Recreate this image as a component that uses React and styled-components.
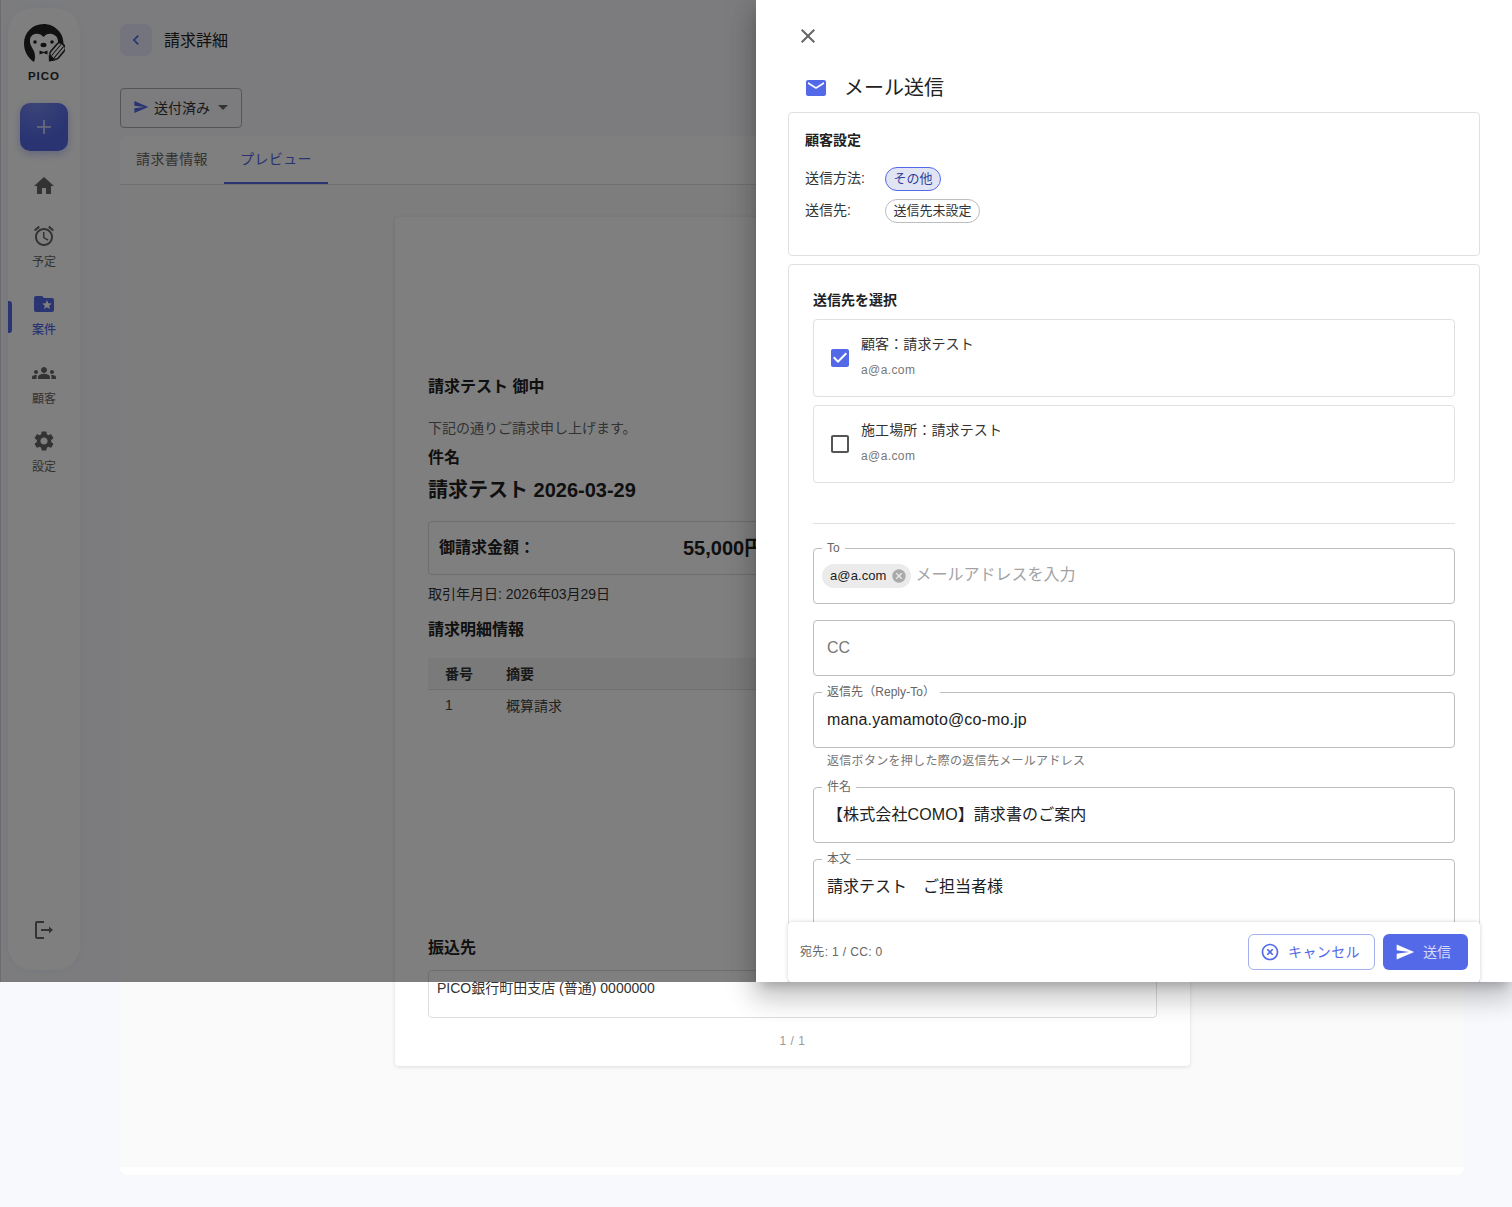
import React from "react";
import styled, { createGlobalStyle } from "styled-components";

const PRIMARY = "#5469e7";
const FONT = `"Liberation Sans", "Noto Sans CJK JP", sans-serif`;

const Global = createGlobalStyle`
  html, body { margin: 0; padding: 0; background: #f8f9fd; }
  body { font-family: ${FONT}; color: #212121; }
  * { box-sizing: border-box; }
`;

const Page = styled.div`
  position: relative;
  width: 1512px;
  height: 1207px;
  overflow: hidden;
  background: #f8f9fd;
  display: flex;
`;

/* ---------- Sidebar ---------- */
const SideColumn = styled.div`
  width: 120px;
  flex: none;
  padding: 8px 40px 0 8px;
`;
const Sidebar = styled.nav`
  width: 72px;
  height: 962px;
  border-radius: 24px;
  background: #fff;
  box-shadow: 0 0 8px rgba(84, 105, 231, 0.08);
  display: flex;
  flex-direction: column;
  align-items: center;
  padding-top: 16px;
  position: relative;
`;
const LogoWord = styled.div`
  font-size: 11.5px;
  font-weight: 700;
  letter-spacing: 1px;
  line-height: 14px;
  margin-top: 5px;
  color: #2a2a2a;
`;
const AddButton = styled.div`
  width: 48px;
  height: 48px;
  margin: 20px 0 23px;
  border-radius: 10px;
  background: radial-gradient(circle at 35% 0%, #7888ee, ${PRIMARY} 65%);
  box-shadow: 0 3px 8px rgba(84, 105, 231, 0.35);
  display: flex;
  align-items: center;
  justify-content: center;
`;
const NavItem = styled.div`
  width: 100%;
  display: flex;
  flex-direction: column;
  align-items: center;
  margin-bottom: ${(p) => p.$gap ?? 20.33}px;
  font-size: 12px;
  line-height: 20px;
  color: ${(p) => (p.$active ? PRIMARY : "#666")};
  font-weight: ${(p) => (p.$active ? 500 : 400)};
`;
const NavLabel = styled.span`
  margin-top: 4px;
`;
const NavIndicator = styled.span`
  position: absolute;
  left: 0;
  top: 293px;
  width: 4px;
  height: 32px;
  background: ${PRIMARY};
  border-radius: 0 3px 3px 0;
`;
const LogoutSlot = styled.div`
  margin-top: auto;
  margin-bottom: 28px;
  display: flex;
`;

/* ---------- Main ---------- */
const Main = styled.main`
  width: 1344px;
  flex: none;
  display: flex;
  flex-direction: column;
  padding-top: 24px;
`;
const TitleRow = styled.div`
  display: flex;
  align-items: center;
  gap: 12px;
  height: 32px;
`;
const BackButton = styled.div`
  width: 32px;
  height: 32px;
  border-radius: 8px;
  background: #e6e9fb;
  display: flex;
  align-items: center;
  justify-content: center;
`;
const PageTitle = styled.div`
  font-size: 16px;
  color: #212121;
  padding-bottom: 2px;
`;
const StatusButton = styled.div`
  width: 122px;
  height: 40px;
  margin-top: 32px;
  border: 1px solid #aaa;
  border-radius: 4px;
  display: flex;
  align-items: center;
  padding: 0 0 2px 12px;
  gap: 5px;
  font-size: 14px;
  color: #333;
`;
const DropSlot = styled.span`
  margin-left: -4px;
  display: flex;
`;
const Board = styled.div`
  margin-top: 8px;
  height: 1039px;
  background: #fff;
  border-radius: 8px;
  display: flex;
  flex-direction: column;
  padding-bottom: 8px;
`;
const TabBar = styled.div`
  height: 49px;
  flex: none;
  display: flex;
  border-bottom: 1px solid #e0e0e0;
`;
const Tab = styled.div`
  height: 48px;
  padding: 0 16px 2px;
  display: flex;
  align-items: center;
  font-size: 14px;
  letter-spacing: 0.4px;
  color: ${(p) => (p.$active ? PRIMARY : "#666")};
  border-bottom: 2px solid ${(p) => (p.$active ? PRIMARY : "transparent")};
`;
const Stage = styled.div`
  flex: 1;
  background: #fafafa;
  padding: 32px 0 0 275px;
`;
const Sheet = styled.div`
  width: 795px;
  height: 849px;
  background: #fff;
  border-radius: 4px;
  box-shadow: 0 1px 4px rgba(0, 0, 0, 0.12);
  padding: 158px 33px 0;
  display: flex;
  flex-direction: column;
`;
const Heading = styled.div`
  font-size: ${(p) => p.$size ?? 16}px;
  font-weight: 700;
  line-height: ${(p) => p.$line ?? 24}px;
  color: #212121;
  margin-top: ${(p) => p.$top ?? 0}px;
`;
const SheetText = styled.div`
  font-size: 14px;
  line-height: 20px;
  color: ${(p) => p.$color ?? "#333"};
  margin-top: ${(p) => p.$top ?? 0}px;
`;
const AmountBox = styled.div`
  height: 54px;
  margin-top: 15px;
  border: 1px solid #ddd;
  border-radius: 4px;
  display: grid;
  grid-template-columns: 244px 1fr;
  align-items: center;
  padding-left: 10px;
`;
const AmountValue = styled.div`
  font-size: 20px;
  font-weight: 700;
  color: #212121;
  padding-bottom: 4px;
`;
const TableHead = styled.div`
  height: 32px;
  margin-top: 16px;
  padding: 0 0 2px 17px;
  background: #f5f5f5;
  border-bottom: 1px solid #e0e0e0;
  display: grid;
  grid-template-columns: 61px 1fr;
  align-items: center;
  font-size: 14px;
  font-weight: 700;
  color: #333;
`;
const TableRow = styled.div`
  height: 32px;
  padding: 0 0 2px 17px;
  display: grid;
  grid-template-columns: 61px 1fr;
  align-items: center;
  font-size: 14px;
  color: #444;
`;
const BankBox = styled.div`
  height: 48px;
  margin-top: 10px;
  border: 1px solid #ddd;
  border-radius: 4px;
  padding: 7px 8px;
  font-size: 14px;
  line-height: 20px;
  color: #333;
`;
const PageNumber = styled.div`
  margin-top: 15px;
  text-align: center;
  font-size: 12px;
  line-height: 16px;
  color: #999;
  letter-spacing: 0.5px;
`;

/* ---------- Overlay ---------- */
const Backdrop = styled.div`
  position: absolute;
  left: 0;
  top: 0;
  width: 100%;
  height: 982px;
  background: rgba(0, 0, 0, 0.5);
  border-left: 1px solid rgba(0, 0, 0, 0.12);
`;
const Drawer = styled.aside`
  position: absolute;
  right: 0;
  top: 0;
  width: 756px;
  height: 982px;
  overflow: hidden;
  background: #fff;
  padding: 24px 32px 0;
`;
const DrawerShadow = styled.div`
  position: absolute;
  right: 0;
  top: 0;
  width: 756px;
  height: 982px;
  box-shadow: 0 8px 10px -5px rgba(0, 0, 0, 0.2), 0 16px 24px 2px rgba(0, 0, 0, 0.14), 0 6px 30px 5px rgba(0, 0, 0, 0.12);
`;
const CloseRow = styled.div`
  height: 24px;
  padding-left: 8px;
  display: flex;
`;
const DrawerTitle = styled.div`
  margin-top: 16px;
  height: 48px;
  display: flex;
  align-items: center;
  gap: 16px;
  padding-left: 16px;
  font-size: 20px;
  color: #212121;
`;
const DrawerTitleText = styled.span`
  padding-bottom: 4px;
`;
const Card = styled.section`
  border: 1px solid #e0e0e0;
  border-radius: 4px;
  padding: ${(p) => p.$pad};
  height: ${(p) => p.$h}px;
  margin-bottom: 8px;
`;
const CardTitle = styled.div`
  font-size: 14px;
  font-weight: 700;
  line-height: 20px;
  color: #212121;
`;
const InfoRow = styled.div`
  display: flex;
  align-items: center;
  height: 24px;
  margin-top: ${(p) => p.$top}px;
  font-size: 14px;
  color: #333;
`;
const InfoLabel = styled.span`
  width: 80px;
  padding-bottom: 5px;
`;
const Chip = styled.span`
  height: 24px;
  padding: 0 7.5px 4px;
  border-radius: 12px;
  display: inline-flex;
  align-items: center;
  font-size: 13px;
  border: 1px solid ${(p) => (p.$on ? PRIMARY : "#bdbdbd")};
  background: ${(p) => (p.$on ? "#e1e4f2" : "#fff")};
  color: ${(p) => (p.$on ? "#2f3f9e" : "#333")};
`;
const Recipients = styled.div`
  padding-top: 1px;
`;
const Recipient = styled.div`
  height: 78px;
  margin-top: 8px;
  border: 1px solid #e0e0e0;
  border-radius: 4px;
  display: flex;
  align-items: center;
  padding-left: 14px;
  gap: 9px;
`;
const RecipientText = styled.div`
  padding-bottom: 4px;
`;
const RecipientName = styled.div`
  font-size: 14px;
  line-height: 20px;
  color: #333;
  letter-spacing: 0.1px;
`;
const RecipientMail = styled.div`
  font-size: 12px;
  line-height: 16px;
  color: #777;
  margin-top: 8px;
  letter-spacing: 0.4px;
`;
const Rule = styled.div`
  height: 1px;
  background: #e0e0e0;
  margin: 40px 0 24px;
`;
const Field = styled.div`
  position: relative;
  height: ${(p) => p.$h ?? 56}px;
  margin-bottom: ${(p) => p.$mb ?? 16}px;
  border: 1px solid #bdbdbd;
  border-radius: 4px;
  display: flex;
  align-items: ${(p) => (p.$top ? "flex-start" : "center")};
  padding: ${(p) => (p.$top ? "17px 13px" : "0 13px")};
  font-size: 16px;
  line-height: 20px;
  letter-spacing: ${(p) => p.$spacing ?? 0}px;
  color: ${(p) => (p.$muted ? "#777" : "#212121")};
`;
const FieldLabel = styled.span`
  position: absolute;
  left: 8px;
  top: -9px;
  padding: 0 5px;
  background: #fff;
  font-size: 12px;
  line-height: 16px;
  letter-spacing: 0.05px;
  color: #666;
`;
const MailChip = styled.span`
  height: 24px;
  border-radius: 12px;
  background: #ebebeb;
  display: inline-flex;
  align-items: center;
  gap: 4px;
  padding: 0 4px 0 8px;
  margin-left: -5px;
  font-size: 13px;
  letter-spacing: 0.1px;
  color: #212121;
`;
const Placeholder = styled.span`
  margin-left: 5px;
  padding-bottom: 2px;
  color: #a3a3a3;
`;
const Helper = styled.div`
  font-size: 12px;
  line-height: 16px;
  letter-spacing: 0.3px;
  color: #777;
  padding-left: 14px;
  height: 17px;
  margin: 5px 0 17px;
`;
const Footer = styled.div`
  position: absolute;
  left: 32px;
  bottom: 0;
  width: 692px;
  height: 60px;
  background: #fff;
  border-radius: 4px;
  box-shadow: 0 0 4px rgba(0, 0, 0, 0.18);
  display: flex;
  align-items: center;
  padding: 0 12px;
`;
const Counter = styled.div`
  flex: 1;
  font-size: 12px;
  letter-spacing: 0.35px;
  color: #666;
  padding-bottom: 3px;
`;
const CancelButton = styled.div`
  width: 127px;
  height: 36px;
  border: 1px solid #a5b0f0;
  border-radius: 6px;
  display: flex;
  align-items: center;
  padding-left: 11px;
  gap: 8px;
  font-size: 14px;
  letter-spacing: 0.4px;
  color: ${PRIMARY};
`;
const ButtonText = styled.span`
  padding-bottom: 3px;
`;
const SendButton = styled.div`
  width: 85px;
  height: 36px;
  margin-left: 8px;
  border-radius: 6px;
  background: ${PRIMARY};
  display: flex;
  align-items: center;
  padding-left: 12px;
  gap: 8px;
  font-size: 14px;
  color: #d5daf8;
`;
const SvgBox = styled.svg`
  display: block;
  flex: none;
`;

const P = {
  close: "M19 6.41 17.59 5 12 10.59 6.41 5 5 6.41 10.59 12 5 17.59 6.41 19 12 13.41 17.59 19 19 17.59 13.41 12z",
  mail: "M20 4H4c-1.1 0-1.99.9-1.99 2L2 18c0 1.1.9 2 2 2h16c1.1 0 2-.9 2-2V6c0-1.1-.9-2-2-2zm0 4l-8 5-8-5V6l8 5 8-5v2z",
  send: "M2.01 21 23 12 2.01 3 2 10l15 2-15 2z",
  home: "M10 20v-6h4v6h5v-8h3L12 3 2 12h3v8z",
  alarm: "M22 5.72l-4.6-3.86-1.29 1.53 4.6 3.86L22 5.72zM7.88 3.39L6.6 1.86 2 5.71l1.29 1.53 4.59-3.85zM12.5 8H11v6l4.75 2.85.75-1.23-4-2.37V8zM12 4c-4.97 0-9 4.03-9 9s4.02 9 9 9c4.97 0 9-4.03 9-9s-4.03-9-9-9zm0 16c-3.87 0-7-3.13-7-7s3.13-7 7-7 7 3.13 7 7-3.13 7-7 7z",
  folder: "M20 6h-8l-2-2H4c-1.1 0-1.99.9-1.99 2L2 18c0 1.1.9 2 2 2h16c1.1 0 2-.9 2-2V8c0-1.1-.9-2-2-2zm-2.06 11L15 15.28 12.06 17l.78-3.33-2.59-2.24 3.41-.29L15 8l1.34 3.14 3.41.29-2.59 2.24.78 3.33z",
  groups: "M12 12.75c1.63 0 3.07.39 4.24.9 1.08.48 1.76 1.56 1.76 2.73V18H6v-1.61c0-1.18.68-2.26 1.76-2.73 1.17-.52 2.61-.91 4.24-.91zM4 13c1.1 0 2-.9 2-2s-.9-2-2-2-2 .9-2 2 .9 2 2 2zm1.13 1.1c-.37-.06-.74-.1-1.13-.1-.99 0-1.93.21-2.78.58C.48 14.9 0 15.62 0 16.43V18h4.5v-1.61c0-.83.23-1.61.63-2.29zM20 13c1.1 0 2-.9 2-2s-.9-2-2-2-2 .9-2 2 .9 2 2 2zm4 3.43c0-.81-.48-1.53-1.22-1.85-.85-.37-1.79-.58-2.78-.58-.39 0-.76.04-1.13.1.4.68.63 1.46.63 2.29V18H24v-1.57zM12 6c1.66 0 3 1.34 3 3s-1.34 3-3 3-3-1.34-3-3 1.34-3 3-3z",
  gear: "M19.14 12.94c.04-.3.06-.61.06-.94 0-.32-.02-.64-.07-.94l2.03-1.58c.18-.14.23-.41.12-.61l-1.92-3.32c-.12-.22-.37-.29-.59-.22l-2.39.96c-.5-.38-1.03-.7-1.62-.94l-.36-2.54c-.04-.24-.24-.41-.48-.41h-3.84c-.24 0-.43.17-.47.41l-.36 2.54c-.59.24-1.13.57-1.62.94l-2.39-.96c-.22-.08-.47 0-.59.22L2.74 8.87c-.12.21-.08.47.12.61l2.03 1.58c-.05.3-.09.63-.09.94s.02.64.07.94l-2.03 1.58c-.18.14-.23.41-.12.61l1.92 3.32c.12.22.37.29.59.22l2.39-.96c.5.38 1.03.7 1.62.94l.36 2.54c.05.24.24.41.48.41h3.84c.24 0 .44-.17.47-.41l.36-2.54c.59-.24 1.13-.56 1.62-.94l2.39.96c.22.08.47 0 .59-.22l1.92-3.32c.12-.22.07-.47-.12-.61l-2.01-1.58zM12 15.6c-1.98 0-3.6-1.62-3.6-3.6s1.62-3.6 3.6-3.6 3.6 1.62 3.6 3.6-1.62 3.6-3.6 3.6z",
  checked: "M19 3H5c-1.11 0-2 .9-2 2v14c0 1.1.89 2 2 2h14c1.11 0 2-.9 2-2V5c0-1.1-.89-2-2-2zm-9 14l-5-5 1.41-1.41L10 14.17l7.59-7.59L19 8l-9 9z",
  blank: "M19 5v14H5V5h14m0-2H5c-1.1 0-2 .9-2 2v14c0 1.1.9 2 2 2h14c1.1 0 2-.9 2-2V5c0-1.1-.9-2-2-2z",
  cancel: "M12 2C6.47 2 2 6.47 2 12s4.47 10 10 10 10-4.47 10-10S17.53 2 12 2zm5 13.59L15.59 17 12 13.41 8.41 17 7 15.59 10.59 12 7 8.41 8.41 7 12 10.59 15.59 7 17 8.41 13.41 12 17 15.59z",
  off: "M14.59 8 12 10.59 9.41 8 8 9.41 10.59 12 8 14.59 9.41 16 12 13.41 14.59 16 16 14.59 13.41 12 16 9.41 14.59 8zM12 2C6.47 2 2 6.47 2 12s4.47 10 10 10 10-4.47 10-10S17.53 2 12 2zm0 18c-4.41 0-8-3.59-8-8s3.59-8 8-8 8 3.59 8 8-3.59 8-8 8z",
  drop: "M7 10l5 5 5-5z",
  back: "M15.41 7.41 14 6l-6 6 6 6 1.41-1.41L10.83 12z",
  logout: "M5 3h7v2H5v14h7v2H5c-1.1 0-2-.9-2-2V5c0-1.1.9-2 2-2zM9 11h8V8.5l4 3.5-4 3.5V13H9z",
};

const Icon = ({ d, size = 24, color = "#666" }) => (
  <SvgBox width={size} height={size} viewBox="0 0 24 24" fill={color}>
    <path d={d} />
  </SvgBox>
);

const Penguin = () => (
  <SvgBox width="42" height="40" viewBox="0 0 42 40">
    <path d="M20.5 0C9.5 0 1 8.5 1 19.5c0 8 4 14.5 10 18.5 2-5 1-9.500-1.500-13.500C6 19 5.500 11.500 12 10c3.500-.8 6.500.5 8.500 3 2-2.500 5-3.800 8.500-3 5.500 1.300 7 6.500 5.500 11L39.500 24c.8-1.500 1-3 1-4.500C40.500 8.500 31.500 0 20.500 0z" fill="#222" />
    <circle cx="12" cy="18" r="1.800" fill="#222" />
    <circle cx="29" cy="18" r="1.800" fill="#222" />
    <ellipse cx="20.500" cy="21" rx="3" ry="2.200" fill="#222" />
    <path d="M16.500 26.500l4 1.500 4-1.500v4l-4-1.500-4 1.500z" fill="#222" />
    <g transform="rotate(40 33 29)">
      <rect x="28" y="18" width="10" height="17" rx="4" fill="#fff" stroke="#222" strokeWidth="1.600" />
      <path d="M31.300 19v15M34.700 19v15" stroke="#222" strokeWidth="1" />
      <path d="M28.500 35l4.500 5 4.500-5z" fill="#222" />
    </g>
  </SvgBox>
);

export default function App() {
  return (
    <Page>
      <Global />
      <SideColumn>
        <Sidebar>
          <NavIndicator />
          <Penguin />
          <LogoWord>PICO</LogoWord>
          <AddButton>
            <SvgBox width="24" height="24" viewBox="0 0 24 24">
              <path d="M12 5v14M5 12h14" stroke="#d9ddf8" strokeWidth="1.600" />
            </SvgBox>
          </AddButton>
          <NavItem $gap={26}><Icon d={P.home} /></NavItem>
          <NavItem><Icon d={P.alarm} /><NavLabel>予定</NavLabel></NavItem>
          <NavItem $active><Icon d={P.folder} color={PRIMARY} /><NavLabel>案件</NavLabel></NavItem>
          <NavItem><Icon d={P.groups} /><NavLabel>顧客</NavLabel></NavItem>
          <NavItem><Icon d={P.gear} /><NavLabel>設定</NavLabel></NavItem>
          <LogoutSlot><Icon d={P.logout} /></LogoutSlot>
        </Sidebar>
      </SideColumn>

      <Main>
        <TitleRow>
          <BackButton><Icon d={P.back} size={20} color={PRIMARY} /></BackButton>
          <PageTitle>請求詳細</PageTitle>
        </TitleRow>
        <StatusButton>
          <Icon d={P.send} size={16} color={PRIMARY} />
          送付済み
          <DropSlot><Icon d={P.drop} size={24} color="#666" /></DropSlot>
        </StatusButton>
        <Board>
          <TabBar>
            <Tab>請求書情報</Tab>
            <Tab $active>プレビュー</Tab>
          </TabBar>
          <Stage>
            <Sheet>
              <Heading>請求テスト 御中</Heading>
              <SheetText $top={19} $color="#666">下記の通りご請求申し上げます。</SheetText>
              <Heading $top={8}>件名</Heading>
              <Heading $size={20} $line={32} $top={4}>請求テスト 2026-03-29</Heading>
              <AmountBox>
                <Heading>御請求金額：</Heading>
                <AmountValue>55,000円</AmountValue>
              </AmountBox>
              <SheetText $top={9}>取引年月日: 2026年03月29日</SheetText>
              <Heading $top={14}>請求明細情報</Heading>
              <TableHead><span>番号</span><span>摘要</span></TableHead>
              <TableRow><span>1</span><span>概算請求</span></TableRow>
              <Heading $top={214}>振込先</Heading>
              <BankBox>PICO銀行町田支店 (普通) 0000000</BankBox>
              <PageNumber>1 / 1</PageNumber>
            </Sheet>
          </Stage>
        </Board>
      </Main>

      <Backdrop />
      <DrawerShadow />
      <Drawer>
        <CloseRow><Icon d={P.close} color="#666" /></CloseRow>
        <DrawerTitle>
          <Icon d={P.mail} color={PRIMARY} />
          <DrawerTitleText>メール送信</DrawerTitleText>
        </DrawerTitle>
        <Card $pad="17px 16px" $h={144}>
          <CardTitle>顧客設定</CardTitle>
          <InfoRow $top={17}>
            <InfoLabel>送信方法:</InfoLabel>
            <Chip $on>その他</Chip>
          </InfoRow>
          <InfoRow $top={8}>
            <InfoLabel>送信先:</InfoLabel>
            <Chip>送信先未設定</Chip>
          </InfoRow>
        </Card>
        <Card $pad="25px 24px 0" $h={800}>
          <CardTitle>送信先を選択</CardTitle>
          <Recipients>
            <Recipient>
              <Icon d={P.checked} color={PRIMARY} />
              <RecipientText>
                <RecipientName>顧客：請求テスト</RecipientName>
                <RecipientMail>a@a.com</RecipientMail>
              </RecipientText>
            </Recipient>
            <Recipient>
              <Icon d={P.blank} color="#555" />
              <RecipientText>
                <RecipientName>施工場所：請求テスト</RecipientName>
                <RecipientMail>a@a.com</RecipientMail>
              </RecipientText>
            </Recipient>
          </Recipients>
          <Rule />
          <Field>
            <FieldLabel>To</FieldLabel>
            <MailChip>a@a.com<Icon d={P.cancel} size={16} color="#aaa" /></MailChip>
            <Placeholder>メールアドレスを入力</Placeholder>
          </Field>
          <Field $muted>CC</Field>
          <Field $mb={0} $spacing={0.14}>
            <FieldLabel>返信先（Reply-To）</FieldLabel>
            mana.yamamoto@co-mo.jp
          </Field>
          <Helper>返信ボタンを押した際の返信先メールアドレス</Helper>
          <Field $spacing={0.1}>
            <FieldLabel>件名</FieldLabel>
            【株式会社COMO】請求書のご案内
          </Field>
          <Field $h={120} $top>
            <FieldLabel>本文</FieldLabel>
            請求テスト　ご担当者様
          </Field>
        </Card>
        <Footer>
          <Counter>宛先: 1 / CC: 0</Counter>
          <CancelButton>
            <Icon d={P.off} size={20} color={PRIMARY} />
            <ButtonText>キャンセル</ButtonText>
          </CancelButton>
          <SendButton>
            <Icon d={P.send} size={20} color="#fff" />
            <ButtonText>送信</ButtonText>
          </SendButton>
        </Footer>
      </Drawer>
    </Page>
  );
}
